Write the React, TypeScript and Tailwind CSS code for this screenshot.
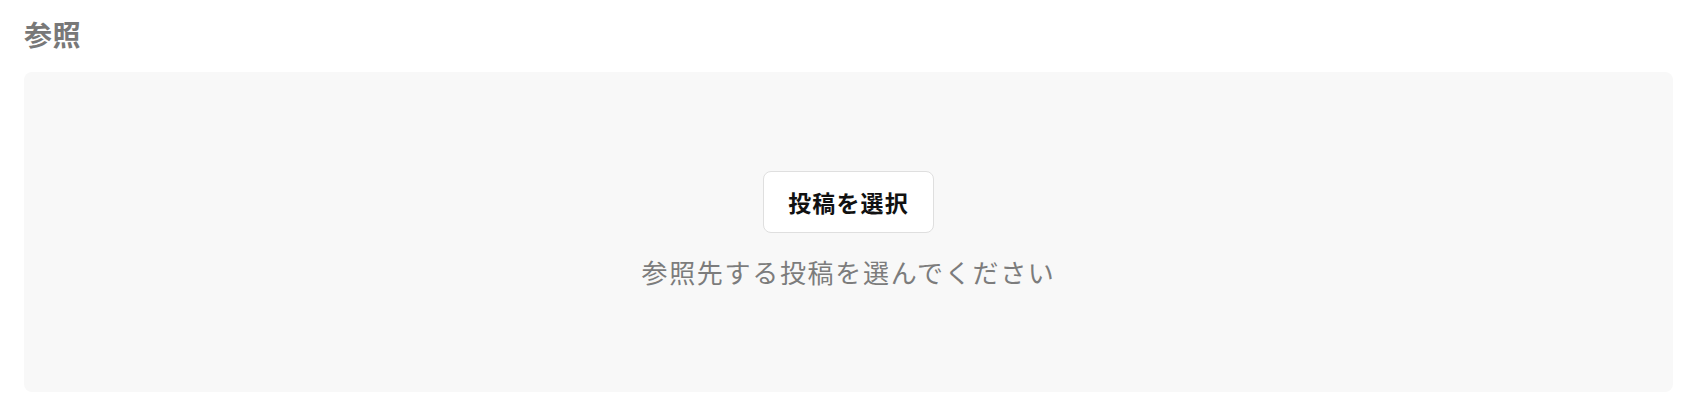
import React from 'react';

const font = { fontFamily: '"Noto Sans CJK JP", "Noto Sans", sans-serif' };

const App = () => {
  return (
    <div className="w-[1702px] h-[416px] bg-white pl-6 pr-[29px] pt-[17px]" style={font}>
      <h2 className="text-[28px] leading-[34px] font-bold text-[#787878] tracking-[0.02em]">参照</h2>
      <div className="mt-[21px] h-[320px] rounded-lg bg-[#f8f8f8] flex flex-col items-center justify-center pb-[3px]">
        <button className="h-[62px] w-[171px] rounded-lg border border-[#dfdfdf] bg-white text-[23px] font-bold text-[#111] tracking-[0.05em]">
          投稿を選択
        </button>
        <p className="mt-[21px] text-[26px] leading-[36px] text-[#7c7c7c] tracking-[0.065em]">
          参照先する投稿を選んでください
        </p>
      </div>
    </div>
  );
};

export default App;
